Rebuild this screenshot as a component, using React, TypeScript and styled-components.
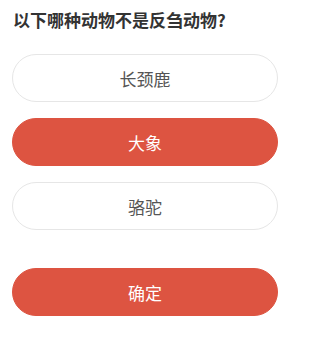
import { useState } from "react";
import styled, { createGlobalStyle } from "styled-components";

const GlobalStyle = createGlobalStyle`
  html, body {
    margin: 0;
    padding: 0;
    background: #ffffff;
  }
  body {
    font-family: "Noto Sans CJK SC", "Noto Sans", sans-serif;
  }
`;

const Page = styled.div`
  width: 296px;
  height: 342px;
  box-sizing: border-box;
  padding: 8px 12px 0 12px;
  display: flex;
  flex-direction: column;
`;

const Question = styled.h2`
  margin: 0 0 0 1px;
  font-size: 17px;
  line-height: 24px;
  font-weight: 700;
  color: #333333;
`;

const Options = styled.div`
  margin-top: 22px;
  display: flex;
  flex-direction: column;
  gap: 16px;
`;

const Pill = styled.button<{ $active?: boolean }>`
  height: 48px;
  width: 266px;
  box-sizing: border-box;
  border-radius: 24px;
  border: 1px solid ${(p) => (p.$active ? "#dd5441" : "#e6e6e6")};
  background: ${(p) => (p.$active ? "#dd5441" : "#ffffff")};
  color: ${(p) => (p.$active ? "#ffffff" : "#555555")};
  font-family: "Noto Sans CJK SC", "Noto Sans", sans-serif;
  font-size: 17px;
  padding: 0;
  cursor: pointer;
  display: flex;
  align-items: center;
  justify-content: center;
`;

const Submit = styled(Pill)`
  margin-top: 38px;
`;

const answers = ["长颈鹿", "大象", "骆驼"];

export default function App() {
  const [picked, setPicked] = useState(1);
  return (
    <>
      <GlobalStyle />
      <Page>
        <Question>以下哪种动物不是反刍动物?</Question>
        <Options>
          {answers.map((a, i) => (
            <Pill key={a} $active={picked === i} onClick={() => setPicked(i)}>
              {a}
            </Pill>
          ))}
        </Options>
        <Submit $active>确定</Submit>
      </Page>
    </>
  );
}
